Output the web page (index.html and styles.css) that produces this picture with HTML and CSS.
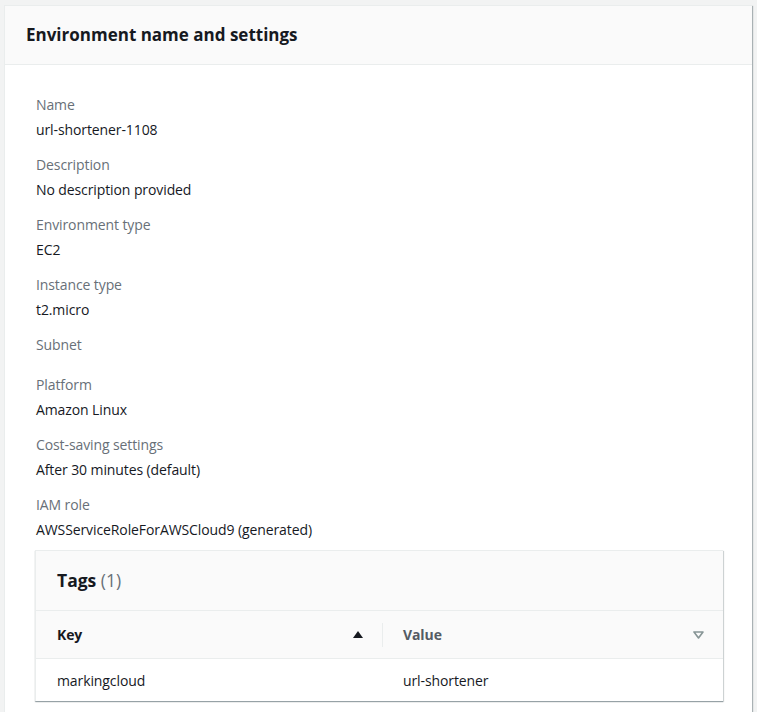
FILE: index.html
```html
<!DOCTYPE html>
<html>
<head>
<meta charset="utf-8">
<link rel="stylesheet" href="styles.css">
</head>
<body>
<div class="page">
  <section class="card">
    <div class="card-header">
      <h2 class="title">Environment name and settings</h2>
    </div>
    <div class="card-body">
      <div class="fields">
        <div class="field"><div class="label">Name</div><div class="value">url-shortener-1108</div></div>
        <div class="field"><div class="label">Description</div><div class="value">No description provided</div></div>
        <div class="field"><div class="label">Environment type</div><div class="value">EC2</div></div>
        <div class="field"><div class="label">Instance type</div><div class="value">t2.micro</div></div>
        <div class="field"><div class="label">Subnet</div><div class="value empty"></div></div>
        <div class="field"><div class="label">Platform</div><div class="value">Amazon Linux</div></div>
        <div class="field"><div class="label">Cost-saving settings</div><div class="value">After 30 minutes (default)</div></div>
        <div class="field"><div class="label">IAM role</div><div class="value">AWSServiceRoleForAWSCloud9 (generated)</div></div>
      </div>
      <div class="tags">
        <div class="tags-header">
          <h3 class="tags-title">Tags <span class="count">(1)</span></h3>
        </div>
        <div class="table">
          <div class="thead">
            <div class="th th-key">
              <span>Key</span>
              <svg class="sort" width="10" height="7" viewBox="0 0 10 7"><path d="M0 7 L5 0 L10 7 Z" fill="#16191f"/></svg>
            </div>
            <div class="th th-value">
              <span>Value</span>
              <svg class="sort" width="11" height="8" viewBox="0 0 11 8"><path d="M1 1 L10 1 L5.5 7 Z" fill="none" stroke="#879596" stroke-width="1.6" stroke-linejoin="round"/></svg>
            </div>
          </div>
          <div class="trow">
            <div class="td td-key">markingcloud</div>
            <div class="td td-value">url-shortener</div>
          </div>
        </div>
      </div>
    </div>
  </section>
</div>
</body>
</html>
```

FILE: styles.css
```css
* { box-sizing: border-box; }
html, body { margin: 0; padding: 0; }
body {
  background: #f2f3f3;
  font-family: "Open Sans", "Noto Sans", sans-serif;
  font-size: 14px;
  letter-spacing: -0.1px;
  color: #16191f;
  height: 712px;
  overflow: hidden;
}
.page {
  padding: 5px 5px 0 4px;
}
.card {
  background: #fff;
  border-left: 1px solid #eaeded;
  border-top: 1px solid #eaeded;
  box-shadow: 1px 1px 1px 0 rgba(0, 28, 36, 0.3);
  min-height: 720px;
}
.card-header {
  background: #fafafa;
  border-bottom: 1px solid #eaeded;
  height: 59px;
  display: flex;
  align-items: center;
  padding-left: 21px;
}
.title {
  margin: 0;
  font-size: 17px;
  font-weight: 700;
  line-height: 24px;
  letter-spacing: 0;
}
.card-body {
  padding: 29px 29px 0 30px;
}
.fields {
  display: flex;
  flex-direction: column;
  gap: 13px;
  padding-left: 1px;
}
.label {
  color: #687078;
  line-height: 22px;
  margin-bottom: 3px;
}
.value {
  line-height: 22px;
}
.value.empty {
  height: 2px;
}
.tags {
  margin-top: 9px;
  border-left: 1px solid #eaeded;
  border-top: 1px solid #eaeded;
  box-shadow: 0 1px 1px 0 rgba(0, 28, 36, 0.3), 1px 1px 1px 0 rgba(0, 28, 36, 0.15);
  background: #fff;
}
.tags-header {
  background: #fafafa;
  height: 60px;
  display: flex;
  align-items: center;
  padding-left: 21px;
  padding-bottom: 2px;
  border-bottom: 1px solid #eaeded;
}
.tags-title {
  margin: 0;
  font-size: 17.5px;
  font-weight: 700;
  line-height: 24px;
  letter-spacing: 0;
}
.count {
  font-weight: 400;
  color: #687078;
}
.thead {
  display: flex;
  background: #fafafa;
  height: 48px;
  border-bottom: 1px solid #eaeded;
  align-items: center;
}
.th {
  display: flex;
  align-items: center;
  justify-content: space-between;
  font-weight: 700;
  height: 24px;
}
.th-key {
  width: 347px;
  padding-left: 21px;
  padding-right: 19px;
  border-right: 1px solid #eaeded;
}
.th-value {
  flex: 1;
  padding-left: 20px;
  padding-right: 19px;
  color: #545b64;
}
.trow {
  display: flex;
  height: 42px;
  align-items: center;
}
.td-key {
  width: 347px;
  padding-left: 21px;
}
.td-value {
  padding-left: 20px;
}
```
